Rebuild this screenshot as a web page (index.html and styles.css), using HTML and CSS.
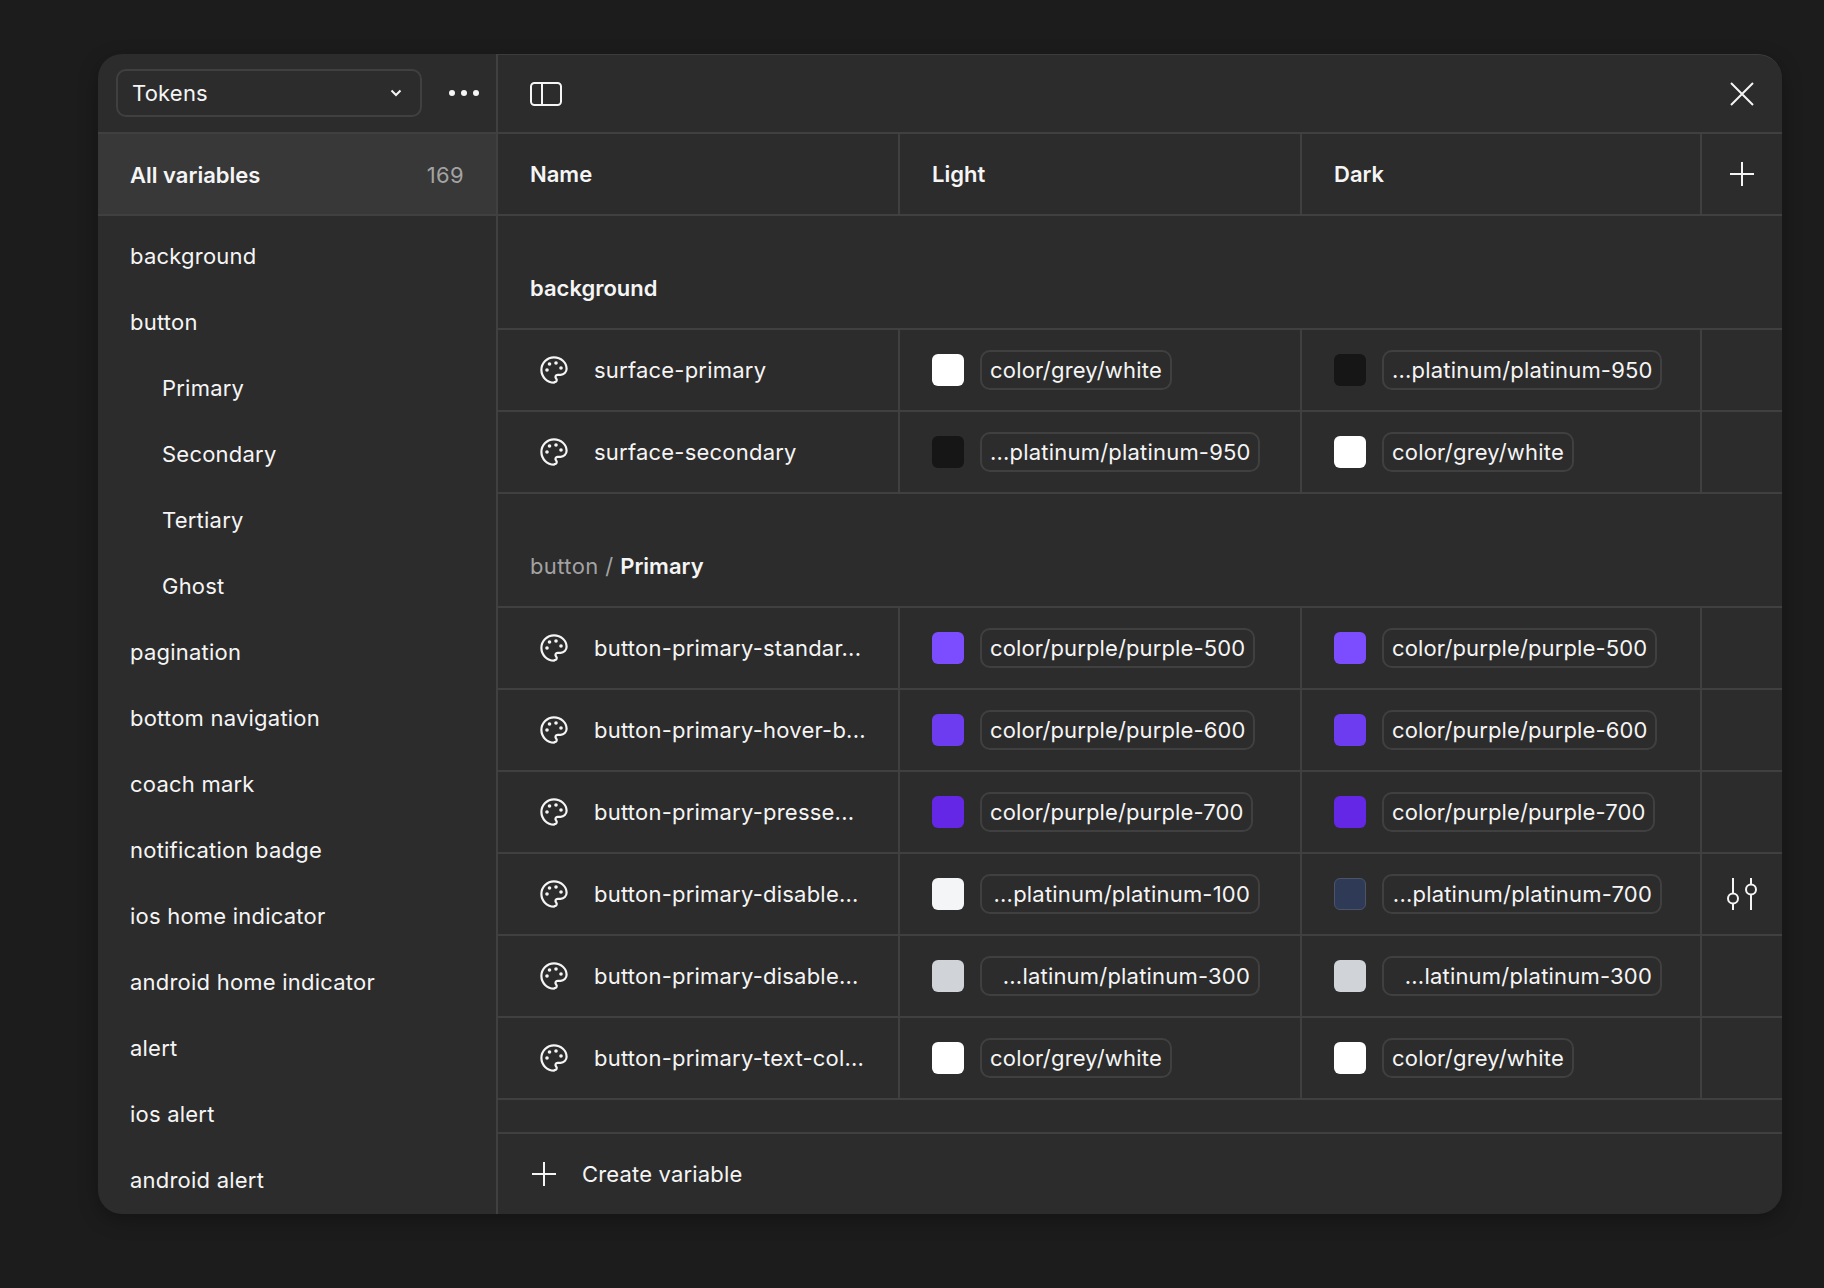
FILE: index.html
```html
<!DOCTYPE html>
<html lang="en">
<head>
    <meta charset="UTF-8">
    <meta name="viewport" content="width=device-width, initial-scale=1.0">
    <title>Tokens variables</title>
    <link rel="stylesheet" href="styles.css">
</head>
<body>
    <svg class="sprites" width="0" height="0">
        <symbol id="palette" viewBox="0 0 28 28">
            <path d="M14 26.6a1.2 1.2 0 0 1 0-25.2 12.6 11.4 0 0 1 12.6 11.4 6 6 0 0 1-6 6h-3a2.1 2.1 0 0 0-1.7 3.4l.4.5a2.1 2.1 0 0 1-1.7 3.4z" fill="none" stroke="currentColor" stroke-width="2.2"/>
            <circle cx="16" cy="7" r="1.8" fill="currentColor"/>
            <circle cx="21" cy="12" r="1.8" fill="currentColor"/>
            <circle cx="9.5" cy="8" r="1.8" fill="currentColor"/>
            <circle cx="7" cy="14" r="1.8" fill="currentColor"/>
        </symbol>
        <symbol id="plus" viewBox="0 0 24 24">
            <path d="M12 0v24M0 12h24" fill="none" stroke="currentColor" stroke-width="2"/>
        </symbol>
    </svg>

    <div class="panel">
        <aside class="sidebar">
            <div class="side-top">
                <div class="select">
                    <span>Tokens</span>
                    <svg class="chevron" width="12" height="8" viewBox="0 0 12 8"><path d="M1.5 1.5 6 6l4.5-4.5" fill="none" stroke="currentColor" stroke-width="2"/></svg>
                </div>
                <svg class="dots" width="30" height="6" viewBox="0 0 30 6"><circle cx="3" cy="3" r="3"/><circle cx="15" cy="3" r="3"/><circle cx="27" cy="3" r="3"/></svg>
            </div>
            <div class="all-vars"><span>All variables</span><span class="count">169</span></div>
            <ul class="groups">
                <li>background</li>
                <li>button</li>
                <li class="sub">Primary</li>
                <li class="sub">Secondary</li>
                <li class="sub">Tertiary</li>
                <li class="sub">Ghost</li>
                <li>pagination</li>
                <li>bottom navigation</li>
                <li>coach mark</li>
                <li>notification badge</li>
                <li>ios home indicator</li>
                <li>android home indicator</li>
                <li>alert</li>
                <li>ios alert</li>
                <li>android alert</li>
            </ul>
        </aside>

        <main class="main">
            <div class="toolbar">
                <svg width="32" height="24" viewBox="0 0 32 24"><rect x="1" y="1" width="30" height="22" rx="3.5" fill="none" stroke="currentColor" stroke-width="2"/><path d="M12 1v22" stroke="currentColor" stroke-width="2"/></svg>
                <svg width="24" height="24" viewBox="0 0 24 24"><path d="M1 1l22 22M23 1 1 23" fill="none" stroke="currentColor" stroke-width="2"/></svg>
            </div>

            <div class="row head">
                <div class="cell">Name</div>
                <div class="cell">Light</div>
                <div class="cell">Dark</div>
                <div class="cell add"><svg width="24" height="24"><use href="#plus"/></svg></div>
            </div>

            <div class="section-title"><b>background</b></div>

            <div class="row">
                <div class="cell name"><svg class="pal" width="28" height="28"><use href="#palette"/></svg>surface-primary</div>
                <div class="cell"><i class="swatch white"></i><span class="pill">color/grey/white</span></div>
                <div class="cell"><i class="swatch p950"></i><span class="pill clip">...platinum/platinum-950</span></div>
                <div class="cell add"></div>
            </div>
            <div class="row">
                <div class="cell name"><svg class="pal" width="28" height="28"><use href="#palette"/></svg>surface-secondary</div>
                <div class="cell"><i class="swatch p950"></i><span class="pill clip">...platinum/platinum-950</span></div>
                <div class="cell"><i class="swatch white"></i><span class="pill">color/grey/white</span></div>
                <div class="cell add"></div>
            </div>

            <div class="section-title"><span class="crumb">button /&nbsp;</span><b>Primary</b></div>

            <div class="row">
                <div class="cell name"><svg class="pal" width="28" height="28"><use href="#palette"/></svg>button-primary-standar...</div>
                <div class="cell"><i class="swatch v500"></i><span class="pill">color/purple/purple-500</span></div>
                <div class="cell"><i class="swatch v500"></i><span class="pill">color/purple/purple-500</span></div>
                <div class="cell add"></div>
            </div>
            <div class="row">
                <div class="cell name"><svg class="pal" width="28" height="28"><use href="#palette"/></svg>button-primary-hover-b...</div>
                <div class="cell"><i class="swatch v600"></i><span class="pill">color/purple/purple-600</span></div>
                <div class="cell"><i class="swatch v600"></i><span class="pill">color/purple/purple-600</span></div>
                <div class="cell add"></div>
            </div>
            <div class="row">
                <div class="cell name"><svg class="pal" width="28" height="28"><use href="#palette"/></svg>button-primary-presse...</div>
                <div class="cell"><i class="swatch v700"></i><span class="pill">color/purple/purple-700</span></div>
                <div class="cell"><i class="swatch v700"></i><span class="pill">color/purple/purple-700</span></div>
                <div class="cell add"></div>
            </div>
            <div class="row">
                <div class="cell name"><svg class="pal" width="28" height="28"><use href="#palette"/></svg>button-primary-disable...</div>
                <div class="cell"><i class="swatch p100"></i><span class="pill clip">...platinum/platinum-100</span></div>
                <div class="cell"><i class="swatch p700"></i><span class="pill clip">...platinum/platinum-700</span></div>
                <div class="cell add">
                    <svg width="30" height="32" viewBox="0 0 30 32"><g fill="none" stroke="currentColor" stroke-width="2"><path d="M6 0v15M6 26v6M24 0v6M24 17v15"/><circle cx="6" cy="20.5" r="5"/><circle cx="24" cy="11.5" r="5"/></g></svg>
                </div>
            </div>
            <div class="row">
                <div class="cell name"><svg class="pal" width="28" height="28"><use href="#palette"/></svg>button-primary-disable...</div>
                <div class="cell"><i class="swatch p300"></i><span class="pill clip">...latinum/platinum-300</span></div>
                <div class="cell"><i class="swatch p300"></i><span class="pill clip">...latinum/platinum-300</span></div>
                <div class="cell add"></div>
            </div>
            <div class="row">
                <div class="cell name"><svg class="pal" width="28" height="28"><use href="#palette"/></svg>button-primary-text-col...</div>
                <div class="cell"><i class="swatch white"></i><span class="pill">color/grey/white</span></div>
                <div class="cell"><i class="swatch white"></i><span class="pill">color/grey/white</span></div>
                <div class="cell add"></div>
            </div>

            <div class="spacer"></div>
            <div class="create"><svg width="24" height="24"><use href="#plus"/></svg>Create variable</div>
        </main>
    </div>
</body>
</html>
```

FILE: styles.css
```css
body {
    margin: 0;
    padding: 54px 0 0 98px;
    height: 1288px;
    box-sizing: border-box;
    overflow: hidden;
    background-color: #1c1c1c;
    color: #f5f5f5;
    font-family: Inter, 'Liberation Sans', sans-serif;
    font-size: 22px;
    letter-spacing: 0.2px;
}
.sprites {
    position: absolute;
}
.panel {
    display: flex;
    width: 1684px;
    height: 1160px;
    background-color: #2c2c2c;
    border-radius: 24px;
    overflow: hidden;
    box-shadow: 0 6px 20px rgba(0, 0, 0, 0.3);
}

/* left column */
.sidebar {
    width: 398px;
    flex-shrink: 0;
    border-right: 2px solid #404040;
}
.side-top {
    display: flex;
    align-items: center;
    justify-content: space-between;
    height: 78px;
    padding: 0 17px 0 18px;
    border-bottom: 2px solid #404040;
}
.select {
    display: flex;
    align-items: center;
    justify-content: space-between;
    width: 306px;
    height: 48px;
    box-sizing: border-box;
    padding: 0 18px 0 14px;
    border: 2px solid #404040;
    border-radius: 10px;
}
.all-vars {
    display: flex;
    align-items: center;
    justify-content: space-between;
    height: 78px;
    padding: 2px 32px 0 32px;
    background-color: #383838;
    border-bottom: 2px solid #404040;
    font-weight: 600;
    letter-spacing: 0;
}
.count {
    font-weight: 400;
    color: #a3a3a3;
    letter-spacing: 0.3px;
}
.dots {
    fill: #f5f5f5;
}
.groups {
    list-style: none;
    margin: 0;
    padding: 7px 0 0 32px;
    letter-spacing: 0.22px;
}
.groups li {
    height: 66px;
    line-height: 66px;
}
.groups .sub {
    padding-left: 32px;
}

/* table */
.main {
    flex: 1;
    border-top: 1px solid #3c3c3c;
    border-top-right-radius: 24px;
}
.toolbar {
    display: flex;
    align-items: center;
    justify-content: space-between;
    height: 76px;
    padding: 1px 28px 0 32px;
    border-bottom: 2px solid #404040;
}
.row {
    display: grid;
    grid-template-columns: 400px 400px 398px 80px;
    column-gap: 2px;
    height: 80px;
    border-bottom: 2px solid #404040;
    background-image: linear-gradient(#404040, #404040), linear-gradient(#404040, #404040), linear-gradient(#404040, #404040);
    background-size: 2px 100%;
    background-repeat: no-repeat;
    background-position: 400px 0, 802px 0, 1202px 0;
}
.cell {
    display: flex;
    align-items: center;
    padding-left: 32px;
    min-width: 0;
    white-space: nowrap;
}
.head {
    font-weight: 600;
    letter-spacing: 0;
}
.name {
    padding-left: 42px;
    letter-spacing: 0.22px;
}
.pal {
    margin-right: 26px;
    flex-shrink: 0;
}
.add {
    justify-content: center;
    padding-left: 0;
}
.section-title {
    display: flex;
    align-items: flex-end;
    height: 114px;
    box-sizing: border-box;
    padding: 0 0 27px 32px;
    border-bottom: 2px solid #404040;
}
.section-title b {
    font-weight: 600;
    letter-spacing: 0;
}
.crumb {
    color: #a3a3a3;
    letter-spacing: 0.4px;
}
.swatch {
    width: 32px;
    height: 32px;
    flex-shrink: 0;
    margin-right: 16px;
    border-radius: 6px;
    box-sizing: border-box;
}
.white { background-color: #ffffff; }
.p100 { background-color: #f4f5f6; }
.p300 { background-color: #d0d3d7; }
.p700 { background-color: #2f3a57; border: 1px solid #4c5468; }
.p950 { background-color: #161616; }
.v500 { background-color: #7c4dff; }
.v600 { background-color: #6d3bf0; }
.v700 { background-color: #6527e6; }
.pill {
    height: 40px;
    line-height: 36px;
    box-sizing: border-box;
    padding: 0 8px;
    border: 2px solid #404040;
    border-radius: 10px;
}
.v500 + .pill, .v600 + .pill, .v700 + .pill {
    letter-spacing: 0.12px;
}
.clip {
    width: 280px;
    text-align: right;
}
.spacer {
    height: 32px;
    border-bottom: 2px solid #404040;
}
.create {
    display: flex;
    align-items: center;
    gap: 26px;
    height: 79px;
    padding-left: 34px;
    letter-spacing: 0.17px;
}
```
